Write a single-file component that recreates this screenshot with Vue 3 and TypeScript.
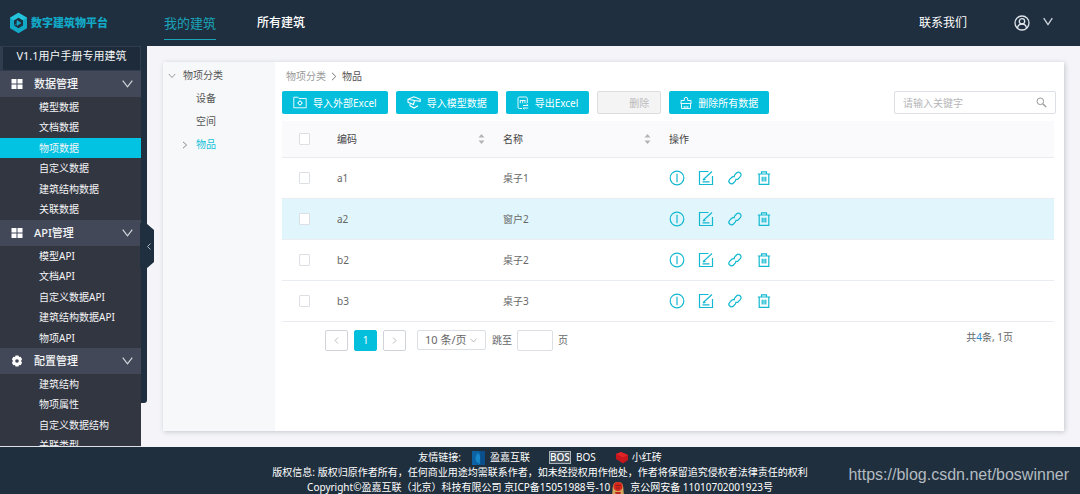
<script setup lang="ts">
import { ref } from 'vue'

interface MenuGroup {
  title: string
  icon: 'grid' | 'gear'
  items: string[]
}

interface Row {
  code: string
  name: string
}

const groups: MenuGroup[] = [
  { title: '数据管理', icon: 'grid', items: ['模型数据', '文档数据', '物项数据', '自定义数据', '建筑结构数据', '关联数据'] },
  { title: 'API管理', icon: 'grid', items: ['模型API', '文档API', '自定义数据API', '建筑结构数据API', '物项API'] },
  { title: '配置管理', icon: 'gear', items: ['建筑结构', '物项属性', '自定义数据结构', '关联类型'] },
]
const activeItem = ref('物项数据')

const rows: Row[] = [
  { code: 'a1', name: '桌子1' },
  { code: 'a2', name: '窗户2' },
  { code: 'b2', name: '桌子2' },
  { code: 'b3', name: '桌子3' },
]
const activeRow = ref('a2')
const selected = ref<string[]>([])
const keyword = ref('')
const pageSize = ref('10')
const jump = ref('')
</script>

<template>
  <div class="page">
    <header class="top">
      <a class="logo" href="#">
        <svg width="19" height="22" viewBox="0 0 19 22">
          <path d="M9.500 .8 18 5.800v10.400L9.500 21.200 1 16.200V5.800z" fill="#12a9c6" />
          <path d="M9.500 .8 18 5.800 13.500 8.200 9.500 6 5.200 8.500 1 5.800z" fill="#25c3dc" />
          <path d="M9.500 5.800 14 8.400v5.200L9.500 16.200 5 13.600V8.400z" fill="#1f2f40" />
          <path d="M8 8.500v5l4-2.500zM5 13.500l3-2" fill="#12a9c6" stroke="#12a9c6" stroke-width=".6" />
        </svg>
        <span>数字建筑物平台</span>
      </a>
      <nav class="main-nav">
        <a href="#" class="current">我的建筑</a>
        <a href="#">所有建筑</a>
      </nav>
      <a class="contact" href="#">联系我们</a>
      <button class="user" type="button" aria-label="用户">
        <svg width="16" height="16" viewBox="0 0 16 16" fill="none" stroke="#dfe5ea" stroke-width="1.300">
          <circle cx="8" cy="8" r="7" />
          <circle cx="8" cy="6.300" r="2.700" />
          <path d="M3.500 13c.4-2.600 2-4 4.500-4s4.100 1.400 4.500 4" />
        </svg>
        <svg width="10" height="12" viewBox="0 0 10 12" fill="none" stroke="#cdd5dc" stroke-width="1.300"><path d="M.7 1.200 5 7.500 9.300 1.200" /></svg>
      </button>
    </header>

    <div class="body">
      <aside class="side">
        <div class="menu">
          <h1 class="project">V1.1用户手册专用建筑</h1>
          <section v-for="g in groups" :key="g.title">
            <button class="group" type="button">
              <svg v-if="g.icon === 'grid'" width="12" height="12" viewBox="0 0 12 12" fill="#fff">
                <path d="M.5 1h5v4.500h-5zM6.500 1h5v4.500h-5zM.5 6.500h5V11h-5zM6.500 6.500h5V11h-5z" />
              </svg>
              <svg v-else width="12" height="12" viewBox="0 0 12 12">
                <path d="M4.500.5h3l.5 1.600 1.600-.3 1.500 2.500L10 6l1.100 1.700-1.500 2.500L8 9.900l-.5 1.600h-3L4 9.900l-1.600.3L.9 7.700 2 6 .9 4.300l1.500-2.500 1.600.3z" fill="#fff" />
                <circle cx="6" cy="6" r="1.800" fill="#424858" />
              </svg>
              <span>{{ g.title }}</span>
              <svg class="arrow" width="11" height="8" viewBox="0 0 11 8" fill="none" stroke="#d3d7dd" stroke-width="1.200"><path d="M.7.700 5.500 6.800 10.300.7" /></svg>
            </button>
            <ul>
              <li v-for="i in g.items" :key="i">
                <a href="#" :class="{ on: i === activeItem }" @click.prevent="activeItem = i">{{ i }}</a>
              </li>
            </ul>
          </section>
        </div>
        <div class="rail"></div>
        <button class="fold" type="button" aria-label="收起">
          <svg width="14" height="46" viewBox="0 0 14 46">
            <path d="M6 0l8 7v32l-8 7H0V0z" fill="#1f2f3f" />
            <path d="M10.500 20.500 7.500 23.500l3 3" fill="none" stroke="#aab4bd" />
          </svg>
        </button>
      </aside>

      <main class="main">
        <div class="card">
          <ul class="tree">
            <li class="root">
              <svg width="8" height="6" viewBox="0 0 8 6" fill="none" stroke="#999"><path d="M.8 1 4 4.600 7.200 1" /></svg>
              <span>物项分类</span>
            </li>
            <li>设备</li>
            <li>空间</li>
            <li class="chosen">
              <svg width="6" height="8" viewBox="0 0 6 8" fill="none" stroke="#888"><path d="M1 .8 4.600 4 1 7.200" /></svg>
              <span>物品</span>
            </li>
          </ul>

          <div class="content">
            <nav class="crumbs">
              <a href="#">物项分类</a>
              <svg width="6" height="9" viewBox="0 0 6 9" fill="none" stroke="#777"><path d="M1 .8 4.800 4.500 1 8.200" /></svg>
              <span>物品</span>
            </nav>

            <div class="tools">
              <button class="btn" type="button">
                <svg width="14" height="13" viewBox="0 0 14 13" fill="none" stroke="currentColor" stroke-width=".9">
                  <path d="M.8 11.800V1.200h4l1.200 1.300h7.200v9.300z" /><circle cx="7" cy="7" r="1.800" /><path d="M7 4.300v1M7 8.700v1M4.300 7h1M8.700 7h1" />
                </svg>
                导入外部Excel
              </button>
              <button class="btn" type="button">
                <svg width="14" height="13" viewBox="0 0 14 13" fill="none" stroke="currentColor" stroke-width="1.100">
                  <path d="M7 .8 1 3.300v3l5.500 2.200 1-4 5.700.8V3.300zM1 3.300l6.500 1.200M3 7.300v2.500l4 2.300 4-2.300" />
                </svg>
                导入模型数据
              </button>
              <button class="btn" type="button">
                <svg width="12" height="14" viewBox="0 0 12 14" fill="none" stroke="currentColor" stroke-width=".9">
                  <path d="M5 12.500H2.500a1.500 1.500 0 0 1-1.500-1.500V2.300A1.500 1.500 0 0 1 2.500 1h6.300a1.500 1.500 0 0 1 1.500 1.500V7M3.300 4v3.200M5.700 4v3.200M8 4v3.200M3.300 4.500h4.700M6 9.500h5M9.500 8l1.700 1.500M6 12h5.200M6 12l1.500 1.200" />
                </svg>
                导出Excel
              </button>
              <button class="btn off" type="button" disabled>删除</button>
              <button class="btn" type="button">
                <svg width="12" height="14" viewBox="0 0 12 14" fill="none" stroke="currentColor" stroke-width=".9">
                  <path d="M1 8V4.500h3.300V3a1.700 1.700 0 0 1 3.400 0v1.500H11V8M1.500 7.500v5h9v-5M1 7.500h10M4.200 12.500V10M6 12.500V10M7.800 12.500V10" />
                </svg>
                删除所有数据
              </button>
              <label class="search">
                <input v-model="keyword" type="text" placeholder="请输入关键字" aria-label="请输入关键字" />
                <svg width="11" height="11" viewBox="0 0 11 11" fill="none" stroke="#999"><circle cx="4.300" cy="4.300" r="3.300" /><path d="M6.700 6.700 10.200 10" stroke-width="1.300" /></svg>
              </label>
            </div>

            <div class="list">
              <table>
                <colgroup>
                  <col class="c-check" /><col class="c-text" /><col class="c-text" /><col />
                </colgroup>
                <thead>
                  <tr>
                    <th class="check"><input type="checkbox" aria-label="全选" /></th>
                    <th v-for="h in ['编码', '名称']" :key="h">
                      <div class="sortable">
                        {{ h }}
                        <svg width="7" height="10" viewBox="0 0 7 10" fill="#b3b3b3"><path d="M3.500 0 6.500 3.500h-6zM3.500 10 .5 6.500h6z" /></svg>
                      </div>
                    </th>
                    <th>操作</th>
                  </tr>
                </thead>
                <tbody>
                  <tr v-for="r in rows" :key="r.code" :class="{ hot: r.code === activeRow }">
                    <td class="check"><input v-model="selected" type="checkbox" :value="r.code" :aria-label="r.name" /></td>
                    <td>{{ r.code }}</td>
                    <td>{{ r.name }}</td>
                    <td>
                      <div class="acts">
                        <button type="button" aria-label="详情">
                          <svg width="16" height="16" viewBox="0 0 16 16"><circle cx="8" cy="8" r="6.800" /><path d="M8 3.800v8.400" /></svg>
                        </button>
                        <button type="button" aria-label="编辑">
                          <svg width="16" height="16" viewBox="0 0 16 16"><path d="M10.500 1.500h-9v13h13V6M4.500 11.800h7M5 9.800 14 1.500M5 9.800l2.500-.3" /></svg>
                        </button>
                        <button type="button" aria-label="关联">
                          <svg width="16" height="16" viewBox="0 0 16 16"><path d="M7.300 6.200a2.700 2.700 0 0 1 .3-1.200l1.900-2a2.650 2.650 0 0 1 3.800 3.700l-2 2a2.600 2.600 0 0 1-3 .4M8.700 9.800a2.700 2.700 0 0 1-.3 1.200l-1.900 2a2.650 2.650 0 0 1-3.800-3.700l2-2a2.600 2.600 0 0 1 3-.4" /></svg>
                        </button>
                        <button type="button" aria-label="删除">
                          <svg width="16" height="16" viewBox="0 0 16 16"><path d="M1.800 4h12.400M5.500 4V1.800h5V4M3.200 4v10.300h9.600V4M6.200 6.800v4.700M8 6.800v4.700M9.800 6.800v4.700" /></svg>
                        </button>
                      </div>
                    </td>
                  </tr>
                </tbody>
              </table>

              <div class="pager">
                <button class="pg" type="button" disabled aria-label="上一页">
                  <svg width="5" height="7" viewBox="0 0 5 7"><path d="M4 .5 1 3.500l3 3" /></svg>
                </button>
                <button class="pg now" type="button">1</button>
                <button class="pg" type="button" disabled aria-label="下一页">
                  <svg width="5" height="7" viewBox="0 0 5 7"><path d="M1 .5l3 3-3 3" /></svg>
                </button>
                <span class="size">
                  <select v-model="pageSize" aria-label="每页条数">
                    <option value="10">10 条/页</option>
                    <option value="20">20 条/页</option>
                  </select>
                  <svg width="7" height="5" viewBox="0 0 7 5"><path d="M.5.700 3.500 4 6.500.7" /></svg>
                </span>
                <label class="jump">跳至 <input v-model="jump" type="text" /> 页</label>
                <p class="total">共<b>4</b>条, 1页</p>
              </div>
            </div>
          </div>
        </div>
      </main>
    </div>

    <footer class="foot">
      <div class="links">
        <span>友情链接:</span>
        <a href="#">
          <svg width="13" height="14" viewBox="0 0 13 14"><path d="M0 0h13v14H0z" fill="#0d62a3" /><path d="M7 0h6v14H7c3-3 1-5 1-7s1-4-1-7z" fill="#0a4f8c" /><path d="M6 2c4 3 1 7 2 11-5-2-6-7-2-11z" fill="#1687c9" /></svg>
          盈嘉互联
        </a>
        <a href="#">
          <span class="bos">BOS</span>
          BOS
        </a>
        <a href="#" class="brick">
          <svg width="14" height="13" viewBox="0 0 14 13"><path d="M1 3l5-2 7 3v5l-5 3.500L1 8z" fill="#c8161d" /><path d="M1 3l5-2 7 3-5 2.500z" fill="#e02428" /></svg>
          小红砖
        </a>
      </div>
      <p>版权信息: 版权归原作者所有，任何商业用途均需联系作者，如未经授权用作他处，作者将保留追究侵权者法律责任的权利</p>
      <p class="record">
        <span>Copyright©盈嘉互联（北京）科技有限公司 京ICP备15051988号-10</span>
        <svg width="14" height="14" viewBox="0 0 14 14">
          <path d="M1 14C2 9 1 5 3 2.500 5 .5 9 .5 11 2.500 13 5 12 9 13 14z" fill="#d9a45b" />
          <circle cx="7" cy="5.500" r="4.600" fill="#d5271d" /><path d="M4.500 4.500h5M5 7h4" stroke="#8d1c18" /><path d="M4 11h6l-1 3H5z" fill="#b92a1c" />
        </svg>
        <a href="#">京公网安备 11010702001923号</a>
      </p>
      <span class="mark">https://blog.csdn.net/boswinner</span>
    </footer>
  </div>
</template>

<style>
body {
  margin: 0;
}
</style>

<style scoped>
.page,
.page * {
  box-sizing: border-box;
}
.page {
  display: flex;
  flex-direction: column;
  height: 100vh;
  background: #f5f5f9;
  color: #666;
  font: 10px/20px "Noto Sans", "Noto Sans CJK SC", sans-serif;
}
button,
input,
select {
  font: inherit;
  color: inherit;
  margin: 0;
}
button {
  padding: 0;
  border: 0;
  background: none;
  cursor: pointer;
}
a {
  color: inherit;
  text-decoration: none;
}
ul,
p,
h1 {
  margin: 0;
  padding: 0;
  list-style: none;
}
svg {
  flex: none;
  display: block;
}

.top {
  flex: none;
  display: flex;
  align-items: center;
  height: 46px;
  padding: 0 27px 0 9px;
  background: #1f2f40;
  color: #fff;
  font-size: 12px;
}
.logo {
  display: flex;
  align-items: center;
  gap: 3px;
  width: 155px;
  color: #12a9c6;
  font-size: 11px;
  font-weight: 900;
}
.main-nav {
  display: flex;
  align-items: center;
  gap: 41px;
  flex: 1;
  font-weight: 500;
}
.main-nav .current {
  padding: 6px 0;
  border-bottom: 1px solid #1aa3b8;
  color: #1aa3b8;
  font-size: 13px;
  line-height: 20px;
  font-weight: 400;
}
.contact {
  margin-right: 47px;
}
.user {
  display: flex;
  align-items: center;
  gap: 13px;
}

.body {
  flex: 1;
  display: flex;
  min-height: 0;
}
.side {
  position: relative;
  display: flex;
  flex: none;
  width: 147px;
}
.menu {
  width: 141px;
  overflow: hidden;
  background: #323641;
  color: #f4f5f6;
  border-bottom: 1px solid #dfe2e6;
}
.rail {
  width: 6px;
  margin-bottom: 44px;
  border-radius: 0 0 3px 0;
  background: #1f2f3f;
}
.fold {
  position: absolute;
  top: 177px;
  right: -7px;
}
.project {
  height: 25px;
  border: solid #303d4f;
  border-width: 1px 1px 1px 3px;
  background: #1e2b3b;
  text-align: center;
  font-size: 11px;
  line-height: 18px;
  font-weight: 400;
}
.group {
  display: flex;
  align-items: center;
  width: 100%;
  height: 26px;
  padding: 0 8px 0 11px;
  background: #424858;
  font-size: 11px;
  line-height: 18px;
  font-weight: 500;
}
.group span {
  flex: 1;
  padding-left: 11px;
  text-align: left;
}
.menu li {
  height: 20px;
}
.menu li:nth-child(even) {
  height: 21px;
}
.menu li a {
  display: block;
  height: 100%;
  padding-left: 39px;
}
.menu li .on {
  background: #03c3e3;
}

.main {
  flex: 1;
  min-width: 0;
  padding: 16px;
}
.card {
  display: flex;
  height: 100%;
  background: #fff;
  box-shadow: 1px 1px 5px #c4c6cc;
}
.tree {
  width: 112px;
  flex: none;
  padding-top: 2px;
  background: #f7f8fa;
  color: #555;
  line-height: 23px;
}
.tree li {
  display: flex;
  align-items: center;
  padding-left: 33px;
}
.tree .root {
  gap: 7px;
  padding-left: 5px;
}
.tree .chosen {
  gap: 8px;
  padding-left: 19px;
  color: #12c3dc;
}
.content {
  flex: 1;
  min-width: 0;
  padding: 4px 8px 0 7px;
}
.list {
  margin-right: 2px;
}
.crumbs {
  display: flex;
  align-items: center;
  gap: 5px;
  height: 20px;
  margin-bottom: 5px;
  padding-left: 4px;
  color: #555;
}
.crumbs a {
  color: #999;
}
.tools {
  display: flex;
  gap: 8px;
  margin-bottom: 7px;
}
.btn {
  display: flex;
  align-items: center;
  gap: 6px;
  height: 23px;
  padding: 0 11px;
  border-radius: 2px;
  background: #03bfdc;
  color: #fff;
  white-space: nowrap;
}
.btn.off {
  width: 64px;
  justify-content: flex-end;
  border: 1px solid #ddd;
  background: #f4f4f5;
  color: #bbb;
}
.search {
  display: flex;
  align-items: center;
  width: 162px;
  height: 23px;
  margin-left: auto;
  padding: 0 8px;
  border: 1px solid #dcdfe6;
  border-radius: 2px;
}
.search input {
  flex: 1;
  min-width: 0;
  padding: 0;
  border: 0;
  outline: 0;
  background: none;
}
.search input::placeholder {
  color: #b5b5b8;
}

table {
  width: 100%;
  border-collapse: collapse;
  table-layout: fixed;
}
.c-check {
  width: 45px;
}
.c-text {
  width: 166px;
}
th,
td {
  height: 41px;
  padding: 0 8px 0 10px;
  border-bottom: 1px solid #e9ecf0;
  text-align: left;
  font-weight: 400;
}
th {
  height: 36px;
  background: #fafafc;
  color: #444;
}
.hot td {
  background: #e1f6fc;
}
.check {
  padding: 0;
}
.check input {
  display: block;
  width: 11px;
  height: 12px;
  margin: 0 auto;
  appearance: none;
  border: 1px solid #dcdfe3;
  border-radius: 1px;
  background: #fff;
}
.check input:checked {
  background: #03bfdc;
}
.sortable {
  display: flex;
  align-items: center;
  justify-content: space-between;
}
.acts {
  display: flex;
  gap: 13px;
}
.acts svg {
  fill: none;
  stroke: #12b9d0;
  stroke-width: 1.2;
}

.pager {
  display: flex;
  align-items: center;
  gap: 6px;
  padding: 8px 41px 0 43px;
}
.pager svg {
  fill: none;
  stroke: #bbb;
}
.pg {
  display: flex;
  align-items: center;
  justify-content: center;
  width: 23px;
  height: 21px;
  border: 1px solid #d0d3d8;
  border-radius: 2px;
}
.pg.now {
  border-color: #03bfdc;
  background: #03bfdc;
  color: #fff;
}
.size {
  display: flex;
  align-items: center;
  width: 69px;
  height: 20px;
  margin-left: 5px;
  padding-right: 8px;
  border: 1px solid #dcdfe3;
  border-radius: 2px;
}
.size select {
  flex: 1;
  min-width: 0;
  padding: 0 0 0 7px;
  border: 0;
  outline: 0;
  appearance: none;
  background: none;
  font-size: 11px;
}
.jump {
  display: flex;
  align-items: center;
  gap: 5px;
}
.jump input {
  width: 36px;
  height: 21px;
  padding: 0 4px;
  border: 1px solid #dcdfe3;
  border-radius: 2px;
}
.total {
  margin-left: auto;
  padding-bottom: 6px;
  line-height: 15px;
}
.total b {
  color: #2a8fd0;
  font-weight: 400;
}

.foot {
  position: relative;
  flex: none;
  padding: 3px 0 0;
  height: 47px;
  overflow: hidden;
  background: #1f2f3d;
  color: #fff;
  line-height: 15px;
  text-align: center;
  white-space: nowrap;
}
.links,
.record {
  display: flex;
  align-items: center;
  justify-content: center;
}
.links {
  gap: 19px;
}
.links > span {
  margin-right: -8px;
}
.links a {
  display: flex;
  align-items: center;
  gap: 5px;
}
.links .brick {
  gap: 3px;
}
.links .bos {
  height: 13px;
  border: 1px solid #aab3ba;
  background: #46535f;
  line-height: 10px;
  font-weight: 500;
}
.record {
  gap: 1px;
}
.record a {
  padding-left: 4px;
}
.mark {
  position: absolute;
  right: 11px;
  top: 18px;
  color: #b4bbc1;
  font: 16px/20px "Liberation Sans", sans-serif;
}
</style>
